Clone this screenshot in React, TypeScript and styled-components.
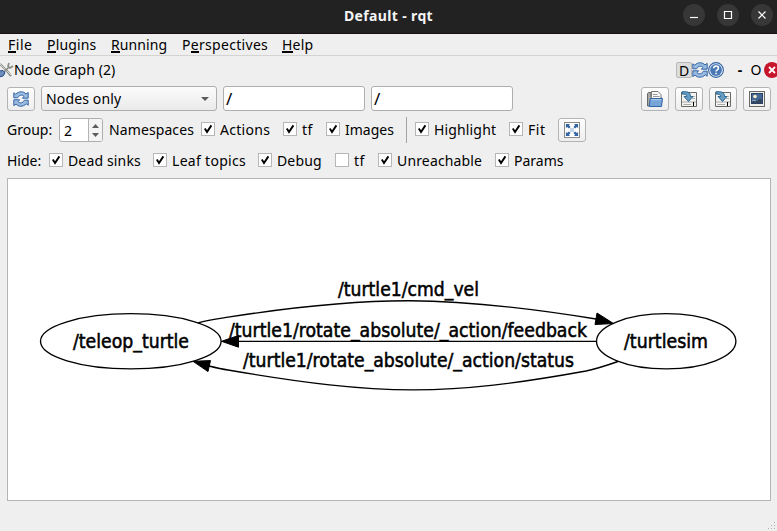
import React from "react";
import styled, { createGlobalStyle } from "styled-components";

const GlobalStyle = createGlobalStyle`
  * { box-sizing: border-box; }
  body {
    margin: 0;
    overflow: hidden;
    background: #efefef;
    color: #000;
    font: 14px/20px "Noto Sans", "Open Sans", sans-serif;
  }
  svg { display: block; flex: none; }
`;

const Window = styled.div`
  width: 777px;
  height: 531px;
  display: flex;
  flex-direction: column;
  background: #efefef;
`;

const TitleBar = styled.header`
  height: 34px;
  flex: none;
  display: grid;
  grid-template-columns: 1fr auto 1fr;
  align-items: center;
  padding: 0 4px 3px 0;
  background: #222;
  border-bottom: 1px solid #190f19;
  color: #f4f4f4;
`;

const Title = styled.h1`
  grid-column: 2;
  margin: 1px 0 0 4px;
  font-size: 14px;
  line-height: 20px;
  font-weight: 700;
  letter-spacing: 0.36px;
  white-space: pre;
`;

const WindowButtons = styled.div`
  display: flex;
  justify-content: flex-end;
  gap: 12px;
`;

const WindowButton = styled.button`
  width: 22px;
  height: 22px;
  padding: 0;
  border: 0;
  border-radius: 50%;
  background: #373737;
`;

const MenuBar = styled.nav`
  height: 22px;
  flex: none;
  display: flex;
  padding-left: 8px;
  border-bottom: 1px solid #d3d3d3;
`;

const MenuItem = styled.div<{ $w: number; $track?: number }>`
  width: ${(p) => p.$w}px;
  line-height: 21px;
  white-space: nowrap;
  letter-spacing: ${(p) => p.$track ?? 0}px;
`;

const Mnemonic = styled.span`
  display: inline-block;
  height: 19px;
  line-height: 21px;
  border-bottom: 2px solid #000;
  vertical-align: top;
`;

const DockBar = styled.div`
  height: 29px;
  flex: none;
  display: flex;
  align-items: center;
  padding-bottom: 1px;
`;

const DockTitle = styled.div`
  flex: 1;
  letter-spacing: 0.09px;
  white-space: nowrap;
`;

const DockActions = styled.div`
  display: flex;
  align-items: center;
  height: 18px;
  margin-bottom: 1px;
`;

const DockToggle = styled.div`
  width: 16px;
  height: 16px;
  border: 1px solid #b8b8b8;
  border-radius: 2px;
  background: #dcdcdc;
  text-align: center;
  line-height: 15px;
`;

const DockGlyph = styled.div<{ $w: number; $gap: number; $bold?: boolean }>`
  width: ${(p) => p.$w}px;
  margin-left: ${(p) => p.$gap}px;
  font-weight: ${(p) => (p.$bold ? 700 : 400)};
  text-align: center;
  line-height: 18px;
`;

const ToolRow = styled.div<{ $h: number }>`
  height: ${(p) => p.$h}px;
  flex: none;
  display: flex;
  align-items: center;
  padding: 0 6px 0 7px;
`;

const IconButton = styled.button<{ $gap?: number }>`
  width: 28px;
  height: 24px;
  margin: 0 0 0 ${(p) => p.$gap ?? 0}px;
  padding: 0;
  flex: none;
  display: flex;
  align-items: center;
  justify-content: center;
  border: 1px solid #b4b4b4;
  border-radius: 3px;
  background: linear-gradient(#fefefe, #eeeeee);
`;

const Spacer = styled.div`
  flex: 1;
`;

const Combo = styled.div`
  width: 176px;
  height: 25px;
  margin-left: 6px;
  padding: 0 7px 0 4px;
  display: flex;
  align-items: center;
  justify-content: space-between;
  border: 1px solid #aeaeae;
  border-radius: 3px;
  background: linear-gradient(#fcfcfc, #eaeaea);
  letter-spacing: 0.15px;
`;

const Field = styled.div`
  width: 142px;
  height: 25px;
  margin-left: 6px;
  padding: 1px 0 0 2px;
  border: 1px solid #aeaeae;
  border-radius: 3px;
  background: #fff;
  line-height: 22px;
  font-size: 17px;
`;

const Label = styled.div<{ $w: number; $track?: number }>`
  width: ${(p) => p.$w}px;
  flex: none;
  white-space: nowrap;
  letter-spacing: ${(p) => p.$track ?? 0}px;
`;

const SpinBox = styled.div`
  width: 44px;
  height: 24px;
  margin-right: 6px;
  display: flex;
  border: 1px solid #aeaeae;
  border-radius: 3px;
  background: #fff;
  overflow: hidden;
`;

const SpinValue = styled.div`
  width: 29px;
  padding-left: 4px;
  border-right: 1px solid #b4b4b4;
  line-height: 23px;
`;

const SpinButtons = styled.div`
  flex: 1;
  display: flex;
  flex-direction: column;
  align-items: center;
  justify-content: space-between;
  padding: 5px 0 4px;
  background: #f4f4f4;
`;

const CheckItem = styled.label<{ $w: number; $track?: number }>`
  width: ${(p) => p.$w}px;
  flex: none;
  display: flex;
  align-items: center;
  gap: 5px;
  white-space: nowrap;
  letter-spacing: ${(p) => p.$track ?? 0}px;
`;

const CheckBox = styled.span`
  width: 14px;
  height: 14px;
  flex: none;
  margin-bottom: 2px;
  border: 1px solid #b6b6b6;
  background: #fff;
`;

const Divider = styled.div`
  width: 1px;
  height: 26px;
  margin-right: 8px;
  background: #a4a4a4;
`;

const GraphView = styled.main`
  width: 764px;
  height: 323px;
  flex: none;
  margin: 4px 0 0 7px;
  border: 1px solid #b4b4b4;
  background: #fff;
`;

const GraphText = styled.text`
  font: 19px "DejaVu Sans", sans-serif;
  fill: #000;
  stroke: #000;
  stroke-width: 0.55px;
`;

const StatusBar = styled.footer`
  flex: 1;
  display: flex;
  justify-content: flex-end;
  align-items: flex-end;
`;

function Refresh() {
  return (
    <svg width="16" height="16" viewBox="0 0 16 16">
      <path d="M0.8 6.8 V1.8 L2.8 3.2 C5.5 0 11 0 12.8 3 L15.2 1.4 V7.2 H9.4 L11 5.4 C9.2 3.4 6.3 3.8 4.6 6.8Z" fill="#9abbe0" stroke="#3465a4" strokeWidth="1" />
      <path d="M15.2 9.2 V14.2 L13.2 12.8 C10.5 16 5 16 3.2 13 L0.8 14.6 V8.8 H6.6 L5 10.6 C6.8 12.6 9.7 12.2 11.4 9.2Z" fill="#9abbe0" stroke="#3465a4" strokeWidth="1" />
    </svg>
  );
}

function Tools() {
  return (
    <svg width="14" height="16" viewBox="0 0 14 16">
      <path d="M0 2 L7 9 L11 14" stroke="#8d8f8b" strokeWidth="2.2" fill="none" />
      <path d="M0 2 L7 9 L11 13" stroke="#e6e6e6" strokeWidth="0.8" fill="none" />
      <path d="M9 1 L8 4 L10 6 L13 4 M9 5 L4 10" stroke="#888a85" strokeWidth="1.7" fill="none" />
      <path d="M-1 9 L3 8.5 L5 11 Q4 15 -1 15Z" fill="#6f8fbb" stroke="#204a87" />
    </svg>
  );
}

function Help() {
  return (
    <svg width="16" height="16" viewBox="0 0 16 16">
      <circle cx="8" cy="8" r="7.4" fill="#e8f0fa" stroke="#3465a4" strokeWidth="1.1" />
      <circle cx="8" cy="8" r="5.9" fill="#4a78b5" />
      <path d="M5.7 6.3 Q5.8 4 8.1 4 Q10.4 4 10.4 6 Q10.4 7.2 9.2 7.9 Q8.1 8.5 8.1 9.6 M8.1 10.8 V12.2" stroke="#fff" strokeWidth="1.6" fill="none" />
    </svg>
  );
}

function Close() {
  return (
    <svg width="13" height="16" viewBox="0 0 13 16">
      <circle cx="8" cy="8" r="8" fill="#c7162b" />
      <path d="M5 5 L11 11 M11 5 L5 11" stroke="#fff" strokeWidth="1.8" />
    </svg>
  );
}

function FolderOpen() {
  return (
    <svg width="16" height="16" viewBox="0 0 16 16">
      <path d="M0.5 15 V2.5 L1.5 1.5 H4 V6 H14 V15Z" fill="#a8aaa6" stroke="#666864" />
      <path d="M4.5 9 V0.5 H11 L14 3.5 V9Z" fill="#fafafa" stroke="#777975" />
      <path d="M6 3.5 H10.5 M6 5.5 H12.5" stroke="#999" />
      <path d="M3.2 7.5 H15.5 L14.5 15.5 H2.2Z" fill="#78a5d8" stroke="#3465a4" />
      <path d="M4 8.7 H14.3" stroke="#b5d0ec" />
    </svg>
  );
}

function SaveAs() {
  return (
    <svg width="16" height="16" viewBox="0 0 16 16">
      <path d="M0.5 1.5 H15.5 V15.5 H0.5Z" fill="#f3f3f2" stroke="#686a66" />
      <path d="M1 11 H15 M2.5 13.5 H10" stroke="#a8aaa6" />
      <path d="M12.5 11 V15" stroke="#000" />
      <path d="M11 5.5 H14 M11 7.5 H14" stroke="#b2b4b0" />
      <path d="M1 0.7 H4.5 Q9.5 0.7 9.5 5.5 H12 L7.5 10.5 L3 5.5 H5.7 Q5.7 3 1 3Z" fill="#669cc2" stroke="#25608c" strokeWidth="0.9" />
    </svg>
  );
}

function Picture() {
  return (
    <svg width="16" height="16" viewBox="0 0 16 16">
      <rect x="0.5" y="0.5" width="15" height="15" fill="#eeeeec" stroke="#686a66" />
      <rect x="2.5" y="2.5" width="11" height="10" fill="#456897" stroke="#2b4266" />
      <circle cx="6" cy="5.5" r="1.8" fill="#f7f0c8" />
      <path d="M3 10 Q6 8 8 10 L11 7.5 L13 9.5 V12 H3Z" fill="#33445d" />
      <path d="M3 10 Q5 8.5 7 10" stroke="#8fabcb" fill="none" />
    </svg>
  );
}

function FitIcon() {
  const corner = "M1.9 1.9 H6 L4.9 3.2 L6.6 4.9 L4.9 6.6 L3.2 4.9 L1.9 6Z";
  return (
    <svg width="16" height="16" viewBox="0 0 16 16">
      <rect x="0.5" y="0.5" width="15" height="15" fill="#fff" stroke="#888a85" />
      <rect x="6" y="6" width="4" height="4" fill="#c4d5e8" />
      {[0, 90, 180, 270].map((angle) => (
        <path key={angle} d={corner} fill="#3465a4" transform={`rotate(${angle} 8 8)`} />
      ))}
    </svg>
  );
}

function Triangle({ up, w = 7 }: { up?: boolean; w?: number }) {
  return (
    <svg width={w} height="4" viewBox="0 0 8 4" preserveAspectRatio="none">
      <path d={up ? "M0 4 L4 0 L8 4Z" : "M0 0 H8 L4 4Z"} fill="#5c5c5c" />
    </svg>
  );
}

type CheckProps = { text: string; w: number; track?: number; off?: boolean };

function Check({ text, w, track, off }: CheckProps) {
  return (
    <CheckItem $w={w} $track={track}>
      <CheckBox>
        {!off && (
          <svg width="12" height="12" viewBox="0 0 12 12">
            <path d="M2.8 5.6 L5 9 L9.4 2.4" stroke="#000" strokeWidth="1.9" fill="none" />
          </svg>
        )}
      </CheckBox>
      <span>{text}</span>
    </CheckItem>
  );
}

const menus = [
  { text: "File", key: 0, w: 39, track: 0.5 },
  { text: "Plugins", key: 0, w: 64, track: 0.15 },
  { text: "Running", key: 0, w: 71, track: 0.1 },
  { text: "Perspectives", key: 1, w: 100, track: 0.3 },
  { text: "Help", key: 0, w: 40, track: 0.2 },
];

const hideOptions: CheckProps[] = [
  { text: "Dead sinks", w: 104, track: 0.15 },
  { text: "Leaf topics", w: 105, track: 0.3 },
  { text: "Debug", w: 77, track: 0.15 },
  { text: "tf", w: 43, off: true, track: 0.5 },
  { text: "Unreachable", w: 117, track: 0.15 },
  { text: "Params", w: 80 },
];

const graphLabels = [
  { text: "/teleop_turtle", x: 73, y: 348.3, w: 116 },
  { text: "/turtlesim", x: 624, y: 348.3, w: 84 },
  { text: "/turtle1/cmd_vel", x: 338, y: 295.8, w: 141 },
  { text: "/turtle1/rotate_absolute/_action/feedback", x: 229, y: 336.8, w: 358 },
  { text: "/turtle1/rotate_absolute/_action/status", x: 243, y: 366.6, w: 331 },
];

function Graph() {
  return (
    <svg width="762" height="321" viewBox="8 179 762 321">
      <g fill="none" stroke="#000" strokeWidth="1.35">
        <ellipse cx="130.8" cy="341.3" rx="90.3" ry="27.6" />
        <ellipse cx="666.2" cy="341.3" rx="69.7" ry="27.6" />
        <path d="M198 322.8 C208 320.2 218 318.8 228 317.2 C370 295 448 295 596 319" />
        <path d="M238 341.3 H596.5" />
        <path d="M618 361.5 C608 365 598 368.5 586 371 C448 396 382 396.5 228 370 C221 369 215 367.5 209 366" />
      </g>
      <path d="M597 313 L613.5 323.5 L595 324.5Z" stroke="#000" />
      <path d="M221.5 341.3 L238.5 335.5 V347.2Z" stroke="#000" />
      <path d="M193 361.3 L210.5 360.6 L208 371.6Z" stroke="#000" />
      {graphLabels.map((l) => (
        <GraphText key={l.text} x={l.x} y={l.y} textLength={l.w} lengthAdjust="spacingAndGlyphs">
          {l.text}
        </GraphText>
      ))}
    </svg>
  );
}

function SizeGrip() {
  return (
    <svg width="10" height="10" viewBox="0 0 10 10">
      <path d="M7 1h1v1h-1z M4 4h1v1h-1z M7 4h1v1h-1z M1 7h1v1h-1z M4 7h1v1h-1z M7 7h1v1h-1z" fill="#b0b0b0" />
    </svg>
  );
}

const windowGlyphs = ["M7 13.5 H15", "M7.5 7.5 H14.5 V14.5 H7.5Z", "M7.5 7.5 L14.5 14.5 M14.5 7.5 L7.5 14.5"];

export default function App() {
  return (
    <Window>
      <GlobalStyle />
      <TitleBar>
        <Title>Default - rqt</Title>
        <WindowButtons>
          {windowGlyphs.map((d) => (
            <WindowButton key={d}>
              <svg width="22" height="22" viewBox="0 0 22 22">
                <path d={d} stroke="#fff" strokeWidth="1.2" fill="none" />
              </svg>
            </WindowButton>
          ))}
        </WindowButtons>
      </TitleBar>
      <MenuBar>
        {menus.map((m) => (
          <MenuItem key={m.text} $w={m.w} $track={m.track}>
            {m.text.slice(0, m.key)}
            <Mnemonic>{m.text[m.key]}</Mnemonic>
            {m.text.slice(m.key + 1)}
          </MenuItem>
        ))}
      </MenuBar>
      <DockBar>
        <Tools />
        <DockTitle>Node Graph (2)</DockTitle>
        <DockActions>
          <DockToggle>D</DockToggle>
          <Refresh />
          <Help />
          <DockGlyph $w={8} $gap={12} $bold>-</DockGlyph>
          <DockGlyph $w={12} $gap={6}>O</DockGlyph>
          <DockGlyph $w={0} $gap={2} />
          <Close />
        </DockActions>
      </DockBar>
      <ToolRow $h={27}>
        <IconButton><Refresh /></IconButton>
        <Combo>
          Nodes only
          <Triangle w={8} />
        </Combo>
        <Field>/</Field>
        <Field>/</Field>
        <Spacer />
        <IconButton><FolderOpen /></IconButton>
        <IconButton $gap={6}><SaveAs /></IconButton>
        <IconButton $gap={6}><SaveAs /></IconButton>
        <IconButton $gap={6}><Picture /></IconButton>
      </ToolRow>
      <ToolRow $h={36}>
        <Label $w={52}>Group:</Label>
        <SpinBox>
          <SpinValue>2</SpinValue>
          <SpinButtons>
            <Triangle up />
            <Triangle />
          </SpinButtons>
        </SpinBox>
        <Label $w={92} $track={0.1}>Namespaces</Label>
        <Check text="Actions" w={82} track={0.3} />
        <Check text="tf" w={43} track={0.5} />
        <Check text="Images" w={80} />
        <Divider />
        <Check text="Highlight" w={94} track={0.15} />
        <Check text="Fit" w={49} track={0.5} />
        <IconButton><FitIcon /></IconButton>
      </ToolRow>
      <ToolRow $h={26}>
        <Label $w={42}>Hide:</Label>
        {hideOptions.map((o) => (
          <Check key={o.text} {...o} />
        ))}
      </ToolRow>
      <GraphView>
        <Graph />
      </GraphView>
      <StatusBar>
        <SizeGrip />
      </StatusBar>
    </Window>
  );
}
